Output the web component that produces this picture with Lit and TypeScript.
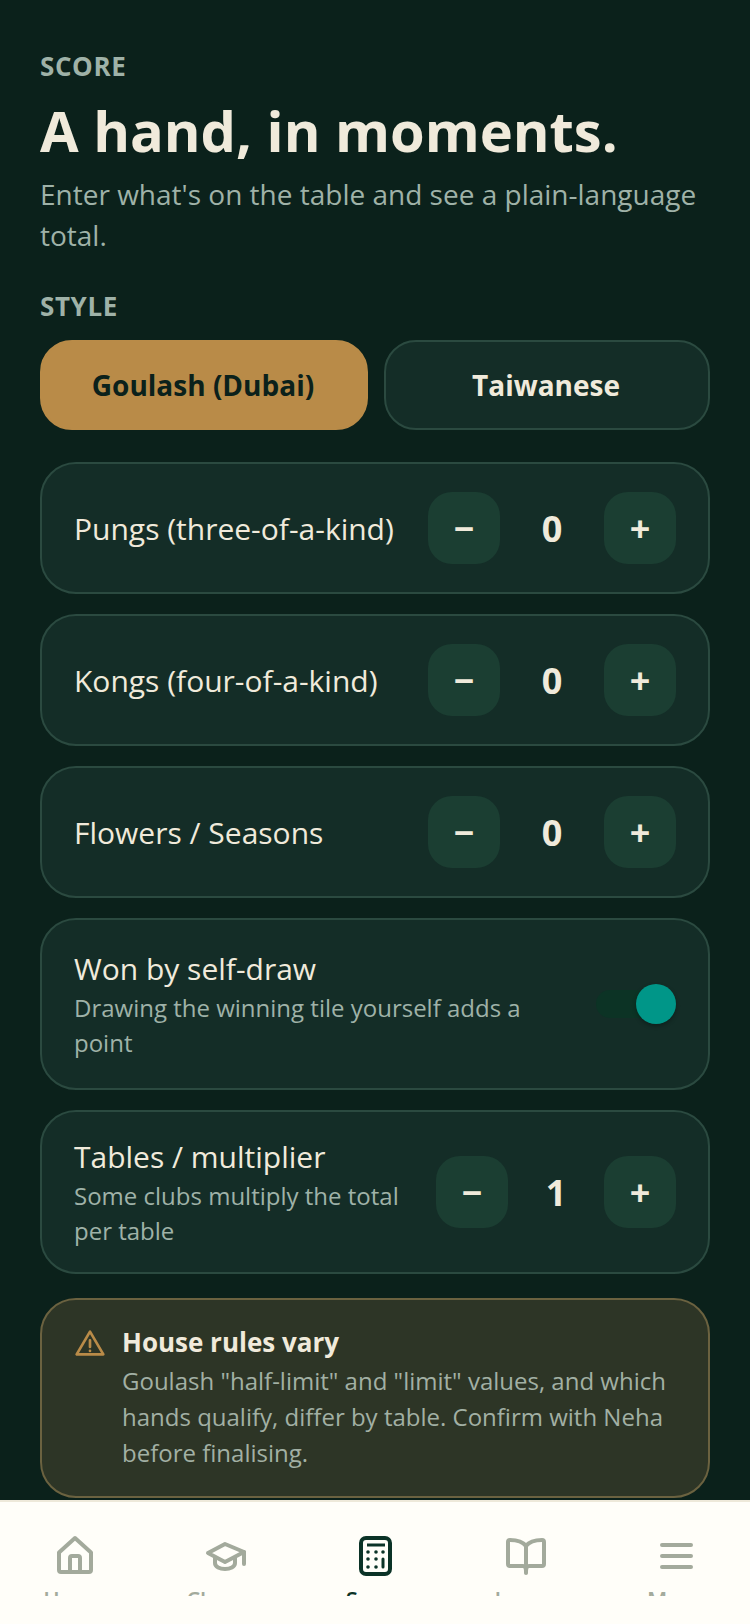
import { LitElement, css, html, svg } from "lit";
import { customElement, property } from "lit/decorators.js";

@customElement("count-row")
export class CountRow extends LitElement {
  @property() label = "";
  @property() hint = "";
  @property({ type: Number }) count = 0;

  static styles = css`
    :host {
      display: flex;
      align-items: center;
      justify-content: space-between;
      gap: 24px;
      padding: 28px 32px;
      background: #142d27;
      border: 2px solid #2b4a40;
      border-radius: 36px;
    }
    :host([hint]) {
      padding: 24px 32px;
    }
    .text {
      flex: 1;
      min-width: 0;
    }
    .label {
      font-size: 30px;
      line-height: 41px;
      color: #f0eadb;
    }
    .hint {
      font-size: 24px;
      line-height: 34.5px;
      color: #9fb2a8;
      margin-top: 2px;
    }
    .stepper {
      display: flex;
      align-items: center;
      flex: none;
    }
    .btn {
      width: 72px;
      height: 72px;
      border-radius: 24px;
      background: #1b3e32;
      color: #f0eadb;
      display: flex;
      align-items: center;
      justify-content: center;
      font-size: 36px;
      font-weight: 700;
    }
    .value {
      width: 104px;
      text-align: center;
      font-size: 36px;
      font-weight: 700;
      color: #f0eadb;
    }
    :host([hint]) .value {
      width: 96px;
    }
  `;

  render() {
    return html`
      <div class="text">
        <div class="label">${this.label}</div>
        ${this.hint ? html`<div class="hint">${this.hint}</div>` : ""}
      </div>
      <div class="stepper">
        <div class="btn">−</div>
        <div class="value">${this.count}</div>
        <div class="btn">+</div>
      </div>
    `;
  }
}

const navItems = [
  {
    label: "Home",
    icon: svg`<path d="M8 20.500 24 6l16 14.500V38a2 2 0 0 1-2 2H10a2 2 0 0 1-2-2z" /><path d="M19 40V26a2 2 0 0 1 2-2h6a2 2 0 0 1 2 2v14" />`,
  },
  {
    label: "Classes",
    icon: svg`<path d="M24 12 43 20 24 30 7 21z" /><path d="M14 26v5c0 4 5 6 10 6s10-2 10-6v-5" /><path d="M43 20v12" />`,
  },
  {
    label: "Score",
    active: true,
    icon: svg`<rect x="10" y="6" width="29" height="36" rx="5" stroke-width="4" />
      <path d="M16 13h18" stroke-width="3" stroke-linecap="butt" />
      <g fill="currentColor" stroke="none">
        <circle cx="17" cy="20" r="1.800" /><circle cx="25" cy="20" r="1.800" /><circle cx="32" cy="20" r="1.800" />
        <circle cx="17" cy="27" r="1.800" /><circle cx="25" cy="27" r="1.800" />
        <circle cx="17" cy="35" r="1.800" /><circle cx="25" cy="35" r="1.800" />
      </g>
      <path d="M32 27v8" stroke-width="3" />`,
  },
  {
    label: "Learn",
    icon: svg`<path d="M25 14c-3-4-8-6-16-6a2 2 0 0 0-2 2v22a2 2 0 0 0 2 2h13c2 0 3 1.500 3 6 0-4.500 1-6 3-6h13a2 2 0 0 0 2-2V10a2 2 0 0 0-2-2c-8 0-13 2-16 6z" /><path d="M25 14v27" />`,
  },
  {
    label: "More",
    icon: svg`<path d="M11 13h29M11 24h29M11 35h29" />`,
  },
];

@customElement("app-root")
export class AppRoot extends LitElement {
  static styles = css`
    :host {
      display: flex;
      flex-direction: column;
      height: 1624px;
      overflow: hidden;
      background: #0b211b;
      font-family: "Open Sans", sans-serif;
    }
    main {
      flex: 1;
      min-height: 0;
      overflow: hidden;
      padding: 49px 40px 0;
      display: flex;
      flex-direction: column;
    }
    .eyebrow {
      font-size: 26px;
      line-height: 34px;
      font-weight: 700;
      letter-spacing: 0.6px;
      color: #9fb2a8;
    }
    h1 {
      margin: 13px 0 0;
      font-size: 56px;
      line-height: 68px;
      font-weight: 700;
      color: #f0eadb;
    }
    .lede {
      margin: 10px 0 0;
      font-size: 28px;
      line-height: 40.5px;
      color: #9fb2a8;
    }
    .style-label {
      margin-top: 34px;
    }
    .styles {
      display: grid;
      grid-template-columns: 328fr 326fr;
      gap: 16px;
      margin-top: 17px;
    }
    .style {
      height: 90px;
      box-sizing: border-box;
      padding-right: 2px;
      border-radius: 32px;
      display: flex;
      align-items: center;
      justify-content: center;
      font-size: 28px;
      font-weight: 700;
      color: #f0eadb;
      background: #142d27;
      border: 2px solid #2b4a40;
    }
    .style.on {
      background: #b98b48;
      border-color: #b98b48;
      color: #0b211b;
    }
    .rows {
      display: flex;
      flex-direction: column;
      gap: 20px;
      margin-top: 32px;
    }
    .toggle-row {
      display: flex;
      align-items: center;
      justify-content: space-between;
      gap: 24px;
      padding: 28px 32px;
      background: #142d27;
      border: 2px solid #2b4a40;
      border-radius: 36px;
    }
    .toggle-text {
      flex: 1;
      min-width: 0;
    }
    .toggle-label {
      font-size: 30px;
      line-height: 41px;
      color: #f0eadb;
    }
    .toggle-hint {
      font-size: 24px;
      line-height: 34.5px;
      color: #9fb2a8;
      margin-top: 2px;
    }
    .switch {
      position: relative;
      width: 80px;
      height: 28px;
      border-radius: 14px;
      background: #0c3325;
      flex: none;
    }
    .knob {
      position: absolute;
      right: 0;
      top: -6px;
      width: 40px;
      height: 40px;
      border-radius: 50%;
      background: #009688;
      box-shadow: 0 2px 4px rgba(0, 0, 0, 0.3);
    }
    .warn {
      display: flex;
      gap: 16px;
      margin-top: 24px;
      padding: 24px 32px 25px;
      background: #2d3526;
      border: 2px solid #6b6240;
      border-radius: 36px;
    }
    .warn svg {
      flex: none;
      width: 32px;
      height: 32px;
      margin-top: 3px;
      fill: none;
      stroke: #b98b48;
      stroke-width: 2;
      stroke-linecap: round;
      stroke-linejoin: round;
    }
    .warn-title {
      font-size: 26px;
      line-height: 36px;
      font-weight: 700;
      color: #f0eadb;
    }
    .warn-body {
      font-size: 24px;
      line-height: 36px;
      color: #a2b0a4;
      margin-top: 3px;
    }
    nav {
      flex: none;
      height: 124px;
      box-sizing: border-box;
      background: #fffef9;
      border-top: 2px solid #eee9da;
      display: grid;
      grid-template-columns: repeat(5, 1fr);
    }
    .tab {
      height: 94px;
      overflow: hidden;
      display: flex;
      flex-direction: column;
      align-items: center;
      padding-top: 30px;
      box-sizing: border-box;
      color: #a3aa9c;
    }
    .tab.active {
      color: #0b3327;
    }
    .tab svg {
      flex: none;
      width: 48px;
      height: 48px;
      fill: none;
      stroke: currentColor;
      stroke-width: 4;
      stroke-linecap: round;
      stroke-linejoin: round;
    }
    .tab span {
      margin-top: 5px;
      font-size: 22px;
      line-height: 28px;
      font-weight: 600;
    }
  `;

  render() {
    return html`
      <main>
        <div class="eyebrow">SCORE</div>
        <h1>A hand, in moments.</h1>
        <p class="lede">Enter what's on the table and see a plain-language total.</p>
        <div class="eyebrow style-label">STYLE</div>
        <div class="styles">
          <div class="style on">Goulash (Dubai)</div>
          <div class="style">Taiwanese</div>
        </div>
        <div class="rows">
          <count-row label="Pungs (three-of-a-kind)"></count-row>
          <count-row label="Kongs (four-of-a-kind)"></count-row>
          <count-row label="Flowers / Seasons"></count-row>
          <div class="toggle-row">
            <div class="toggle-text">
              <div class="toggle-label">Won by self-draw</div>
              <div class="toggle-hint">Drawing the winning tile yourself adds a point</div>
            </div>
            <div class="switch"><div class="knob"></div></div>
          </div>
          <count-row
            label="Tables / multiplier"
            hint="Some clubs multiply the total per table"
            count="1"
          ></count-row>
        </div>
        <div class="warn">
          <svg viewBox="0 0 24 24">
            <path d="M12 3.500 2 20.500h20z" />
            <path d="M12 10v5M12 17.800v.2" />
          </svg>
          <div>
            <div class="warn-title">House rules vary</div>
            <div class="warn-body">
              Goulash "half-limit" and "limit" values, and which hands qualify, differ by table.
              Confirm with Neha before finalising.
            </div>
          </div>
        </div>
      </main>
      <nav>
        ${navItems.map(
          (item) => html`
            <div class="tab ${item.active ? "active" : ""}">
              <svg viewBox="0 0 48 48">${item.icon}</svg>
              <span>${item.label}</span>
            </div>
          `
        )}
      </nav>
    `;
  }
}
